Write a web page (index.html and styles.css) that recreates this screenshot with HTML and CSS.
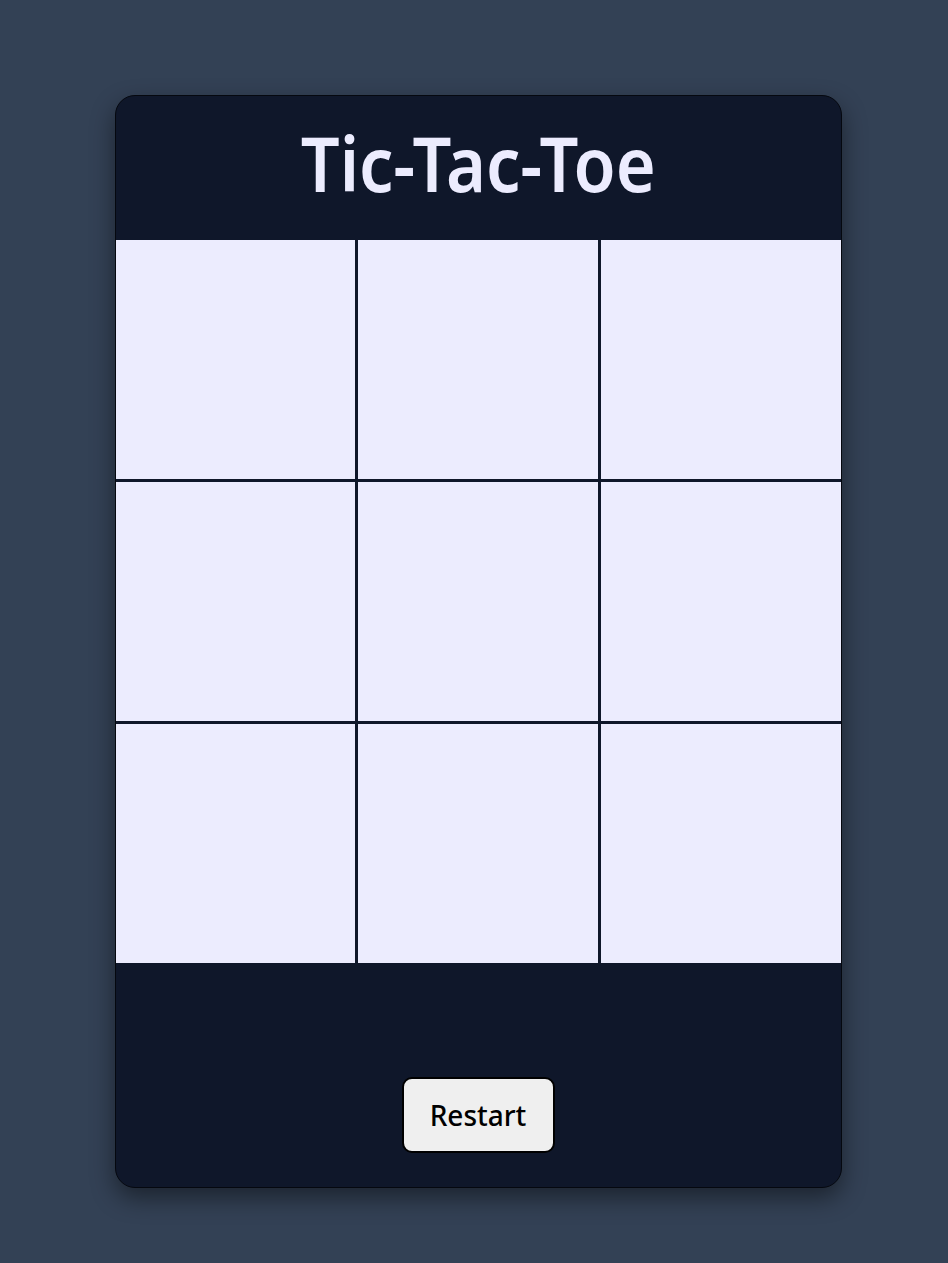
FILE: index.html
```html
<!DOCTYPE html>
<html lang="en">
<head>
<meta charset="utf-8">
<title>Tic-Tac-Toe</title>
<link rel="stylesheet" href="styles.css">
</head>
<body>
  <main class="card">
    <header class="card-header">
      <h1 class="title">Tic-Tac-Toe</h1>
    </header>
    <div class="board">
      <div class="cell"></div>
      <div class="cell"></div>
      <div class="cell"></div>
      <div class="cell"></div>
      <div class="cell"></div>
      <div class="cell"></div>
      <div class="cell"></div>
      <div class="cell"></div>
      <div class="cell"></div>
    </div>
    <footer class="card-footer">
      <button class="restart" type="button">Restart</button>
    </footer>
  </main>
</body>
</html>
```

FILE: styles.css
```css
* { box-sizing: border-box; }

html, body {
  margin: 0;
  height: 100%;
}

body {
  background: #334155;
  font-family: "Noto Sans", "Open Sans", sans-serif;
  display: flex;
  justify-content: center;
  align-items: flex-start;
  padding: 95px 0 0 8px;
}

.card {
  width: 727px;
  background: #0f172a;
  border: 1px solid #05080f;
  border-radius: 20px;
  box-shadow: 0 10px 25px rgba(0, 0, 0, 0.45);
  overflow: hidden;
  display: flex;
  flex-direction: column;
}

.card-header {
  height: 144px;
  display: flex;
  align-items: center;
  justify-content: center;
}

.title {
  margin: 0;
  color: #ececfe;
  font-family: "Noto Sans", "Open Sans", sans-serif;
  font-size: 76px;
  font-weight: 600;
  line-height: 1;
  padding-bottom: 10px;
  transform: scaleX(0.9);
}

.board {
  display: grid;
  grid-template-columns: repeat(3, 1fr);
  grid-auto-rows: 239px;
  gap: 3px;
  background: #0f172a;
}

.cell {
  background: #ececfe;
}

.card-footer {
  height: 224px;
  display: flex;
  justify-content: center;
  align-items: flex-end;
  padding-bottom: 34px;
}

.restart {
  width: 153px;
  height: 76px;
  background: #efefef;
  color: #000;
  border: 2px solid #000;
  border-radius: 10px;
  font-family: "Noto Sans", "Open Sans", sans-serif;
  font-size: 28px;
  font-weight: 500;
  cursor: pointer;
}
```
